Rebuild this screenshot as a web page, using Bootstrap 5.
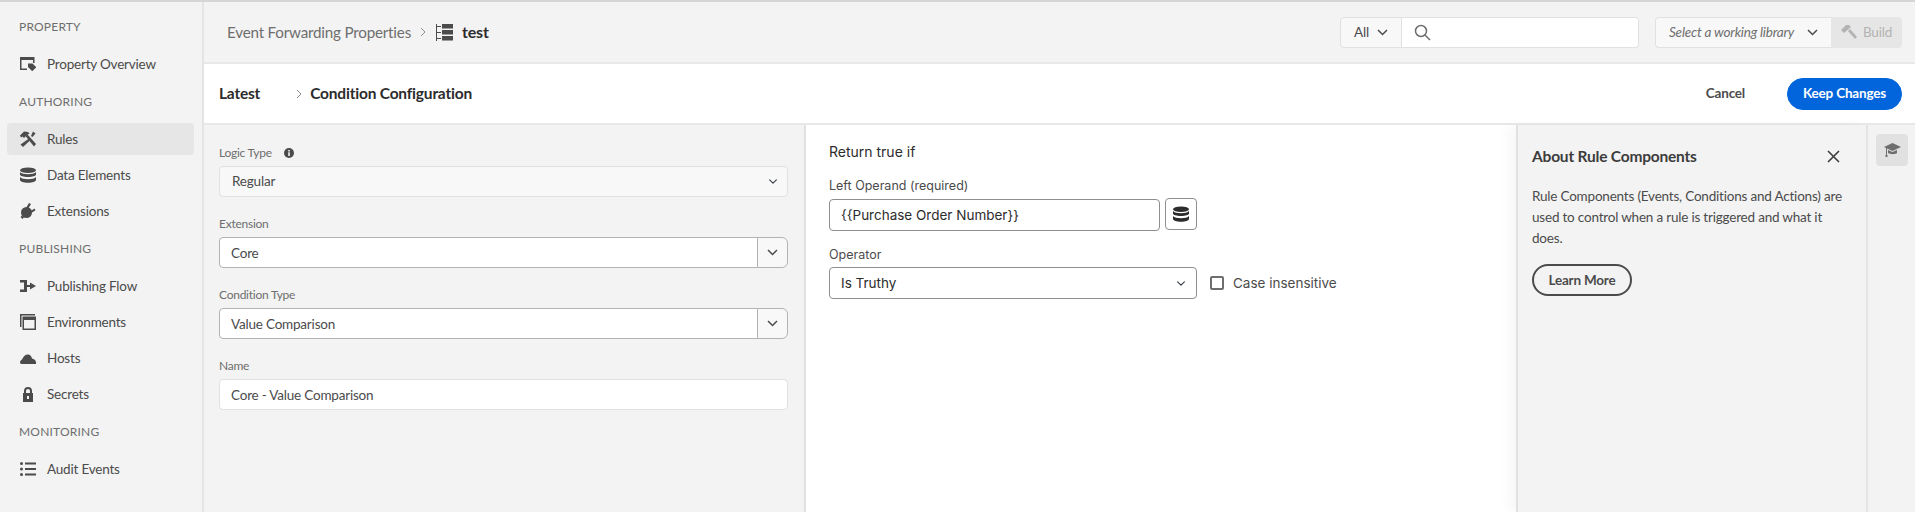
<!DOCTYPE html>
<html lang="en">
<head>
    <meta charset="UTF-8">
    <meta name="viewport" content="width=device-width, initial-scale=1">
    <title>Condition Configuration</title>
    <link rel="stylesheet" href="https://cdn.jsdelivr.net/npm/bootstrap@5.3.0/dist/css/bootstrap.min.css">
    <style>
        html, body { height: 100%; overflow: hidden; }
        body { font-family: Lato, "Liberation Sans", sans-serif; font-size: 13.5px; letter-spacing: -.2px; color: #4b4b4b; background: #f3f3f3; }
        .shell { height: 512px; border-top: 2px solid #d5d5d5; }
        .side-nav { width: 204px; border-right: 2px solid #e4e4e4; padding: 5px 8px 0 7px; }
        .side-head { height: 39px; line-height: 39px; padding-left: 12px; font-size: 12px; letter-spacing: .2px; color: #6e6e6e; }
        .side-link { height: 32px; margin: 2px 0; padding-left: 13px; gap: 11px; border-radius: 4px; color: #4b4b4b; text-decoration: none; }
        .side-link.is-on { background: #e6e6e6; }
        .side-link svg { width: 16px; height: 16px; flex: none; fill: #4b4b4b; }
        .top-bar { height: 62px; border-bottom: 2px solid #e8e8e8; padding: 0 13px 0 23px; }
        .crumb { font-size: 15.200px; color: #6e6e6e; }
        .crumb-end { font-size: 16px; font-weight: 700; color: #2c2c2c; margin-left: 9px; }
        .search-box { width: 299px; height: 31px; }
        .search-box .btn, .lib-box .pick { background: #f8f8f8; border: 1px solid #e1e1e1; color: #4b4b4b; font-size: 13.5px; letter-spacing: -.2px; }
        .search-box .btn { width: 62px; padding: 0 0 0 13px; text-align: left; border-radius: 4px 0 0 4px; }
        .find-wrap { background: #fff; border: 1px solid #e1e1e1; border-left: 0; border-radius: 0 4px 4px 0; padding-left: 12px; }
        .lib-box { width: 247px; height: 31px; }
        .lib-box .pick { border-radius: 4px 0 0 4px; border-right: 0; padding: 0 13px; font-style: italic; color: #6e6e6e; }
        .build-btn { width: 71px; background: #e6e6e6; border-radius: 0 4px 4px 0; color: #b3b3b3; gap: 6px; }
        .tool-bar { height: 61px; background: #fff; border-bottom: 2px solid #e8e8e8; padding: 0 13px 0 15px; }
        .tool-title { font-size: 15.500px; font-weight: 700; color: #2c2c2c; }
        .title-chev { margin: 0 6px 0 35px; }
        .cancel-btn { font-size: 13.5px; letter-spacing: -.2px; font-weight: 700; color: #4b4b4b; margin-right: 42px; padding: 0; border: 0; }
        .keep-btn { width: 115px; height: 32px; padding: 0; border-radius: 16px; font-size: 13.5px; letter-spacing: -.2px; font-weight: 700; background: #0265dc; border-color: #0265dc; }
        .pane-left { width: 602px; border-right: 2px solid #e1e1e1; padding: 19px 16px 0 15px; }
        .fld-label { height: 18px; line-height: 18px; margin-bottom: 4px; font-size: 12px; letter-spacing: -.25px; color: #6e6e6e; }
        .fld-row { margin-bottom: 18px; }
        .pane-left .form-control, .pane-left .form-select { height: 31px; font-size: 13.5px; letter-spacing: -.2px; color: #4b4b4b; padding: 0 12px; border-radius: 4px; }
        .soft-sel.form-select { background-color: #f8f8f8; border-color: #e1e1e1; background-size: 12px 9px; background-position: right 8px center; }
        .pane-left .plain-in.form-control { border-color: #e1e1e1; padding-left: 11px; }
        .pane-left .input-group .form-control { border-color: #b3b3b3; padding-left: 11px; }
        .drop-btn { width: 31px; padding: 0; background: #f8f8f8; border: 1px solid #b3b3b3; display: flex; align-items: center; justify-content: center; }
        .pane-mid { width: 710px; background: #fff; padding: 17px 0 0 23px; font-family: Inter, "Liberation Sans", sans-serif; letter-spacing: 0; color: #2c2c2c; }
        .mid-title { height: 20px; line-height: 20px; font-size: 14px; margin-bottom: 15px; }
        .mid-label { height: 18px; line-height: 18px; font-size: 12.5px; color: #4b4b4b; }
        .mid-row { margin-bottom: 15px; }
        .op-label { margin-bottom: 3px; }
        .pane-mid .form-control { width: 331px; height: 32px; font-size: 13.500px; color: #2c2c2c; border-color: #8e8e8e; border-radius: 4px; padding: 0 11px; margin-top: 4px; }
        .pane-mid .form-select { width: 368px; height: 32px; font-size: 13.500px; color: #2c2c2c; border-color: #8e8e8e; border-radius: 4px; padding: 0 11px; background-size: 12px 9px; background-position: right 9px center; }
        .db-btn { width: 32px; height: 32px; margin-left: 5px; margin-top: 3px; padding: 0; border: 1px solid #8e8e8e; border-radius: 4px; display: flex; align-items: center; justify-content: center; background: #fff; }
        .case-check { margin-left: 13px; gap: 9px; font-size: 13.500px; color: #4b4b4b; }
        .case-check .form-check-input { width: 14px; height: 14px; margin: 0; border: 2px solid #6e6e6e; border-radius: 2px; }
        .pane-help { width: 350px; border-left: 2px solid #e1e1e1; padding: 20px 26px 0 14px; box-shadow: -8px 0 10px rgba(0, 0, 0, .03); position: relative; }
        .help-title { font-size: 15.500px; font-weight: 700; line-height: 22px; color: #3c3c3c; margin-bottom: 19px; }
        .help-text { font-size: 13.500px; line-height: 21px; margin-bottom: 15px; width: 316px; }
        .learn-btn { width: 100px; height: 32px; padding: 0; border: 2px solid #4b4b4b; border-radius: 16px; font-size: 13.5px; letter-spacing: -.2px; font-weight: 700; color: #4b4b4b; }
        .help-rail { width: 49px; border-left: 2px solid #e4e4e4; padding: 9px 0 0 8px; }
        .rail-btn { width: 32px; height: 32px; background: #e1e1e1; border-radius: 4px; }
    </style>
</head>
<body>
<div class="shell d-flex">
    <nav class="side-nav flex-shrink-0 d-flex flex-column">
        <div class="side-head">PROPERTY</div>
        <a class="side-link d-flex align-items-center" href="#">
            <svg viewBox="0 0 16 16"><path d="M0 1h14.500v6H13V4H1.500v8.500H7V14H0z"/><path d="M8 7.500h4.500L16 11v.5L12.500 15H12L8 11z"/></svg>Property Overview</a>
        <div class="side-head">AUTHORING</div>
        <a class="side-link is-on d-flex align-items-center" href="#">
            <svg viewBox="0 0 16 16"><path d="M0 4.500L4 .5l4 .5 1.500 1.500L7 4 4 7 2.500 5.500 1 6.500z"/><path d="M5.500 5l2-1.500L16 13l-2 2.500z"/><path d="M13 .5l2.500 2-3 3.500-1.500-1z"/><path d="M9 7.500L10.500 9 3 16 .5 13.500z"/></svg>Rules</a>
        <a class="side-link d-flex align-items-center" href="#">
            <svg viewBox="0 0 16 16"><ellipse cx="8" cy="3.200" rx="8" ry="2.800"/><path d="M0 5v2.500C0 9 3.600 10 8 10s8-1 8-2.500V5c-1 1.500-4.500 2.200-8 2.200S1 6.500 0 5zM0 10v3c0 1.600 3.600 2.800 8 2.800s8-1.200 8-2.800v-3c-1 1.500-4.500 2.200-8 2.200S1 11.500 0 10z"/></svg>Data Elements</a>
        <a class="side-link d-flex align-items-center" href="#">
            <svg viewBox="0 0 16 16"><circle cx="6.500" cy="9.500" r="5.500"/><path d="M6 5l3-5 2 1-3 5zM10 8.500l4.500-3 1 1.800-4.500 3zM2 12.500l2 2-1.500 1.500-2-2z"/></svg>Extensions</a>
        <div class="side-head">PUBLISHING</div>
        <a class="side-link d-flex align-items-center" href="#">
            <svg viewBox="0 0 16 16"><path d="M0 2h7v5h3V4.500L16 8l-6 3.500V9H7v5H0v-2.500h4v-7H0z"/></svg>Publishing Flow</a>
        <a class="side-link d-flex align-items-center" href="#">
            <svg viewBox="0 0 16 16"><path d="M0 0h15v1.500H1.500V13H0z"/><path d="M2.500 2.500H16V16H2.500zM4 6v8.500h10.500V6z"/></svg>Environments</a>
        <a class="side-link d-flex align-items-center" href="#">
            <svg viewBox="0 0 16 16"><path d="M1.500 14c-2.500 0-1.500-3.500.5-4.500C3.500 6 6 4 8.500 4.500 10.500 5 11.500 6.500 12 8.500c3 .5 4.500 3 4 5.500z"/></svg>Hosts</a>
        <a class="side-link d-flex align-items-center" href="#">
            <svg viewBox="0 0 16 16"><path d="M4 7V5a4 4 0 0 1 8 0v2h1v9H3V7zm2 0h4V5a2 2 0 0 0-4 0zm1 3v3h2v-3z"/></svg>Secrets</a>
        <div class="side-head">MONITORING</div>
        <a class="side-link d-flex align-items-center" href="#">
            <svg viewBox="0 0 16 16"><circle cx="1.500" cy="2.500" r="1.500"/><circle cx="1.500" cy="8" r="1.500"/><circle cx="1.500" cy="13.500" r="1.500"/><path d="M5 1.500h11v2H5zM5 7h11v2H5zM5 12.500h11v2H5z"/></svg>Audit Events</a>
    </nav>

    <div class="flex-grow-1 d-flex flex-column">
        <header class="top-bar d-flex align-items-center justify-content-between">
            <div class="d-flex align-items-center">
                <span class="crumb">Event Forwarding Properties</span>
                <svg class="mx-2" width="9" height="10" viewBox="0 0 9 10" fill="none" stroke="#8e8e8e"><path d="M2 1l4 4-4 4"/></svg>
                <svg width="17" height="17" viewBox="0 0 17 17" fill="#4b4b4b"><path d="M0 0h1v17H0zM1 2h4v1H1zM1 8h4v1H1zM1 14h4v1H1z"/><path d="M6 0h11v4.500H6zM6 6h11v4.500H6zM6 12h11v4.500H6z"/></svg>
                <span class="crumb-end">test</span>
            </div>
            <div class="d-flex align-items-center gap-3">
                <div class="search-box d-flex">
                    <button class="btn d-flex align-items-center gap-2" type="button">All
                        <svg width="11" height="7" viewBox="0 0 11 7" fill="none" stroke="#4b4b4b" stroke-width="1.500"><path d="M1 1l4.500 4.500L10 1"/></svg>
                    </button>
                    <div class="find-wrap flex-grow-1 d-flex align-items-center">
                        <svg width="17" height="17" viewBox="0 0 17 17" fill="none" stroke="#6e6e6e" stroke-width="1.500"><circle cx="7" cy="7" r="5.500"/><path d="M11 11l5 5"/></svg>
                    </div>
                </div>
                <div class="lib-box d-flex">
                    <div class="pick flex-grow-1 d-flex align-items-center justify-content-between">Select a working library
                        <svg width="11" height="7" viewBox="0 0 11 7" fill="none" stroke="#4b4b4b" stroke-width="1.500"><path d="M1 1l4.500 4.500L10 1"/></svg>
                    </div>
                    <div class="build-btn d-flex align-items-center justify-content-center">
                        <svg width="16" height="16" viewBox="0 0 16 16" fill="#b3b3b3"><path d="M0 6l5-5h3l2 2-7 6zM7 7l2-2 7 8-2 2z"/></svg>Build
                    </div>
                </div>
            </div>
        </header>

        <div class="tool-bar d-flex align-items-center justify-content-between">
            <div class="d-flex align-items-center">
                <span class="tool-title">Latest</span>
                <svg class="title-chev" width="9" height="10" viewBox="0 0 9 10" fill="none" stroke="#8e8e8e"><path d="M2 1l4 4-4 4"/></svg>
                <span class="tool-title">Condition Configuration</span>
            </div>
            <div class="d-flex align-items-center">
                <button class="btn cancel-btn" type="button">Cancel</button>
                <button class="btn btn-primary keep-btn" type="button">Keep Changes</button>
            </div>
        </div>

        <div class="flex-grow-1 d-flex">
            <div class="pane-left flex-shrink-0">
                <div class="fld-row">
                    <div class="fld-label d-flex align-items-center gap-2">Logic Type
                        <svg class="ms-1" width="10" height="10" viewBox="0 0 10 10"><circle cx="5" cy="5" r="5" fill="#4b4b4b"/><path d="M4.200 2h1.600v1.500H4.200zM4.200 4.300h1.600V8H4.200z" fill="#f3f3f3"/></svg>
                    </div>
                    <select class="form-select soft-sel"><option>Regular</option></select>
                </div>
                <div class="fld-row">
                    <div class="fld-label">Extension</div>
                    <div class="input-group">
                        <input class="form-control" type="text" value="Core">
                        <button class="btn drop-btn" type="button"><svg width="11" height="7" viewBox="0 0 11 7" fill="none" stroke="#4b4b4b" stroke-width="1.500"><path d="M1 1l4.500 4.500L10 1"/></svg></button>
                    </div>
                </div>
                <div class="fld-row">
                    <div class="fld-label">Condition Type</div>
                    <div class="input-group">
                        <input class="form-control" type="text" value="Value Comparison">
                        <button class="btn drop-btn" type="button"><svg width="11" height="7" viewBox="0 0 11 7" fill="none" stroke="#4b4b4b" stroke-width="1.500"><path d="M1 1l4.500 4.500L10 1"/></svg></button>
                    </div>
                </div>
                <div class="fld-row">
                    <div class="fld-label">Name</div>
                    <input class="form-control plain-in" type="text" value="Core - Value Comparison">
                </div>
            </div>

            <div class="pane-mid flex-shrink-0">
                <div class="mid-title">Return true if</div>
                <div class="mid-label">Left Operand (required)</div>
                <div class="mid-row d-flex align-items-start">
                    <input class="form-control" type="text" value="{{Purchase Order Number}}">
                    <button class="db-btn" type="button">
                        <svg width="16" height="16" viewBox="0 0 16 16" fill="#2c2c2c"><ellipse cx="8" cy="3.200" rx="8" ry="2.800"/><path d="M0 5v2.500C0 9 3.600 10 8 10s8-1 8-2.500V5c-1 1.500-4.500 2.200-8 2.200S1 6.500 0 5zM0 10v3c0 1.600 3.600 2.800 8 2.800s8-1.200 8-2.800v-3c-1 1.500-4.500 2.200-8 2.200S1 11.500 0 10z"/></svg>
                    </button>
                </div>
                <div class="mid-label op-label">Operator</div>
                <div class="d-flex align-items-center">
                    <select class="form-select"><option>Is Truthy</option></select>
                    <label class="case-check d-flex align-items-center">
                        <input class="form-check-input" type="checkbox">Case insensitive
                    </label>
                </div>
            </div>

            <aside class="pane-help flex-shrink-0">
                <div class="d-flex justify-content-between align-items-center help-title">About Rule Components
                    <svg width="13" height="13" viewBox="0 0 13 13" fill="none" stroke="#3c3c3c" stroke-width="1.600"><path d="M1 1l11 11M12 1L1 12"/></svg>
                </div>
                <p class="help-text">Rule Components (Events, Conditions and Actions) are used to control when a rule is triggered and what it does.</p>
                <button class="btn learn-btn" type="button">Learn More</button>
            </aside>

            <div class="help-rail flex-grow-1">
                <div class="rail-btn d-flex align-items-center justify-content-center">
                    <svg width="17" height="16" viewBox="0 0 17 16" fill="#6e6e6e"><path d="M8.500 1L17 5l-8.500 4L3 6.500V13H2V6L0 5z"/><path d="M4 8l4.500 2L13 8v3c-1 1.500-7 1.500-9 0zM1.500 13h2v2h-2z"/></svg>
                </div>
            </div>
        </div>
    </div>
</div>
<script src="https://cdn.jsdelivr.net/npm/bootstrap@5.3.0/dist/js/bootstrap.bundle.min.js"></script>
</body>
</html>
